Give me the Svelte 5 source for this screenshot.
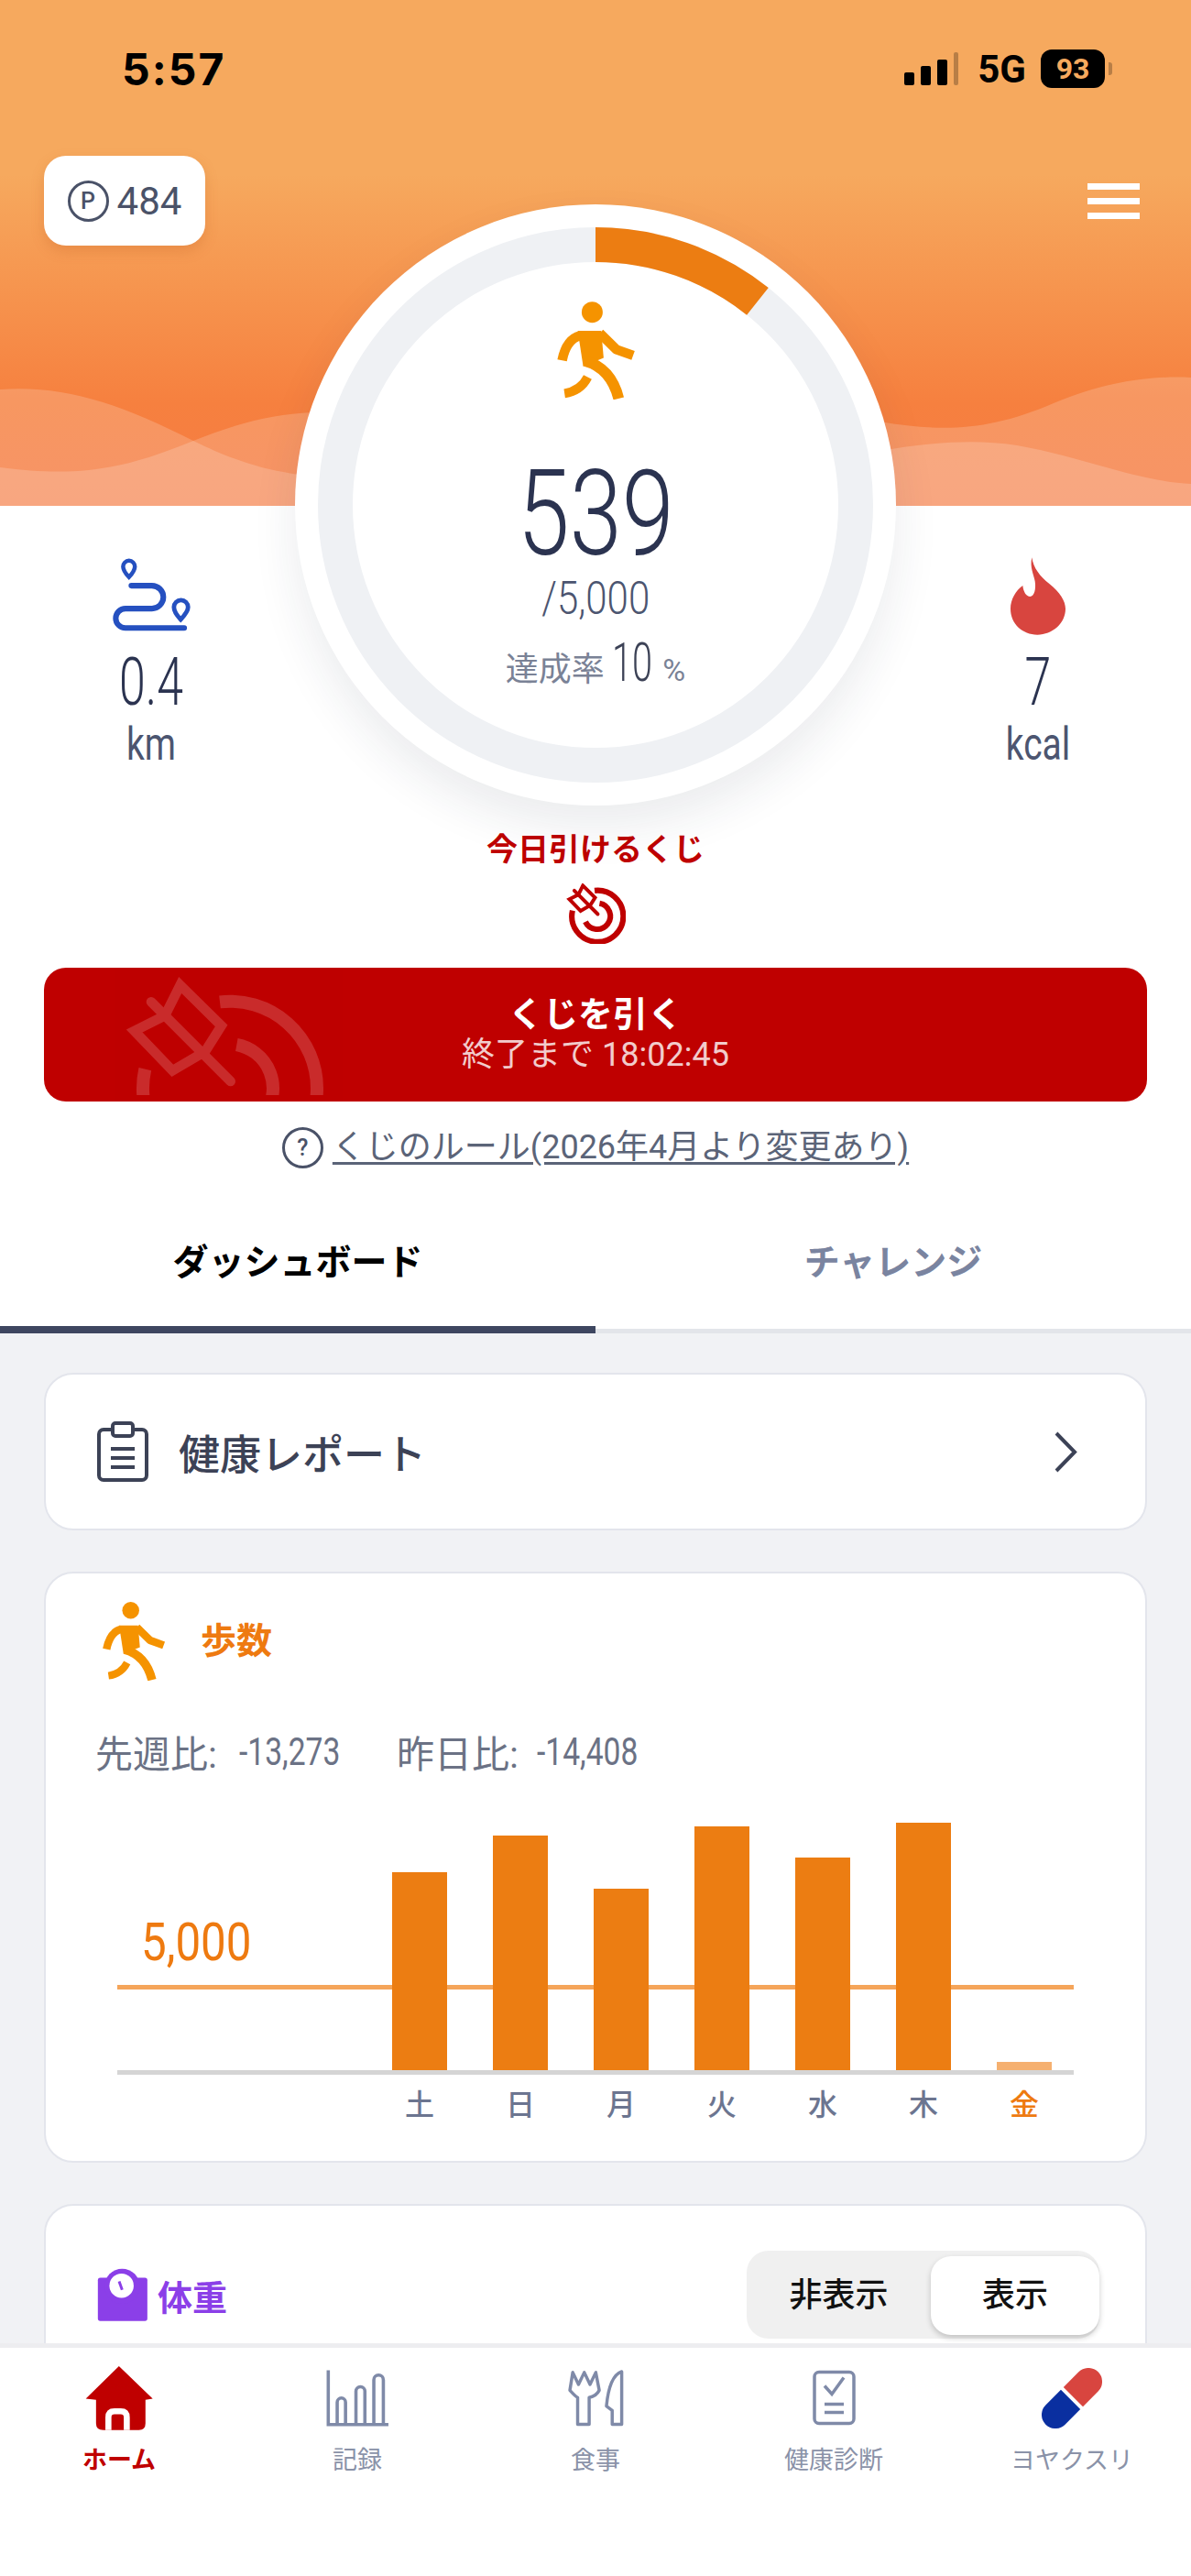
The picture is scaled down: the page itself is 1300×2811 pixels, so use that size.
<script>
	const goal = 5000;
	const steps = 539;
	const ringRadius = 284;
	const circumference = 2 * Math.PI * ringRadius;
	const arc = circumference * 0.107;

	const bars = [
		{ day: '土', height: 216 },
		{ day: '日', height: 256 },
		{ day: '月', height: 198 },
		{ day: '火', height: 266 },
		{ day: '水', height: 232 },
		{ day: '木', height: 270 },
		{ day: '金', height: 9, today: true }
	];
</script>

{#snippet walker()}
	<svg class="walker" viewBox="50 25 265 325">
		<circle cx="170" cy="60" r="35" fill="#f59300" />
		<path d="M122 122 H200 L208 212 L140 240 Z" fill="#f59300" />
		<g fill="none" stroke="#f59300" stroke-linejoin="round">
			<path d="M130 138 Q84 150 70 220" stroke-width="32" />
			<path d="M195 130 L250 184 L306 204" stroke-width="32" />
			<path d="M145 222 Q232 245 258 347" stroke-width="36" />
			<path d="M155 276 Q132 322 78 330" stroke-width="30" />
		</g>
	</svg>
{/snippet}

{#snippet shuttle(color, ring, line)}
	<g fill="none" stroke={color}>
		<path d="M175 380 A285 285 0 1 0 420 160" stroke-width={ring} />
		<path d="M475 300 A145 145 0 1 1 318 505" stroke-width={ring} />
		<path d="M290 105 L425 238 L372 322 L265 385 L140 255 L240 205 Z" stroke-width={line} stroke-linejoin="miter" />
		<path d="M195 160 L455 420" stroke-width={line} stroke-linecap="round" />
	</g>
{/snippet}

<div class="app">
	<div class="main">
		<section class="top">
			<div class="sky">
				<svg class="waves" viewBox="0 0 1300 552" preserveAspectRatio="none">
					<path d="M0 425 C70 420 130 440 211 481 C270 510 300 514 340 520 L340 552 L0 552 Z" fill="#fff" opacity="0.18" />
					<path d="M0 510 C90 522 140 510 211 481 C260 461 300 452 340 450 L340 552 L0 552 Z" fill="#fff" opacity="0.18" />
					<path d="M960 460 C1030 472 1080 470 1150 440 C1210 415 1260 410 1300 412 L1300 552 L960 552 Z" fill="#fff" opacity="0.18" />
					<path d="M960 492 C1010 484 1060 478 1110 486 C1180 498 1240 525 1300 528 L1300 552 L960 552 Z" fill="#fff" opacity="0.18" />
				</svg>

				<div class="status">
					<span class="clock">5:57</span>
					<div class="status-right">
						<div class="signal">
							<i class="s1"></i><i class="s2"></i><i class="s3"></i><i class="s4"></i>
						</div>
						<span class="net">5G</span>
						<span class="battery">93</span>
						<i class="battery-tip"></i>
					</div>
				</div>

				<div class="topbar">
					<div class="points">
						<span class="round-mark">P</span>
						<span>484</span>
					</div>
					<div class="burger"><i></i><i></i><i></i></div>
				</div>
			</div>

			<div class="dial">
				<svg class="ring" viewBox="0 0 656 656">
					<circle cx="328" cy="328" r={ringRadius} fill="none" stroke="#eff1f4" stroke-width="38" />
					<circle
						cx="328"
						cy="328"
						r={ringRadius}
						fill="none"
						stroke="#ec7d12"
						stroke-width="38"
						stroke-dasharray="{arc} {circumference}"
						transform="rotate(-90 328 328)"
					/>
				</svg>
				<div class="dial-body">
					<div class="dial-walker">{@render walker()}</div>
					<div class="count">{steps}</div>
					<div class="goal">/5,000</div>
					<div class="rate">
						<span class="rate-label">達成率</span>
						<span class="rate-num">10</span>
						<span class="rate-unit">%</span>
					</div>
				</div>
			</div>

			<div class="stats">
				<div class="stat">
					<svg class="stat-icon" viewBox="0 0 285 265" width="92" height="85">
						<g fill="none" stroke="#2550c0" stroke-width="19" stroke-linecap="round">
							<path d="M75 97 H145 a39 39 0 0 1 0 78 H55 a33 33 0 0 0 0 66 H255" />
							<path d="M67 68 C52 52 47 42 47 32 a20 20 0 0 1 40 0 C87 42 82 52 67 68 Z" stroke-width="14" />
							<path d="M243 212 C226 194 220 182 220 170 a24 24 0 0 1 48 0 C268 182 260 194 243 212 Z" stroke-width="15" />
						</g>
					</svg>
					<div class="stat-value">0.4</div>
					<div class="stat-unit">km</div>
				</div>
				<div class="stat right">
					<svg class="stat-icon" viewBox="38 22 180 253" width="60" height="85">
						<path
							d="M108 22 C112 55 135 85 165 108 C200 135 218 165 218 190 C218 238 175 275 126 275 C78 275 38 240 38 190 C38 160 55 130 78 114 C80 135 90 150 102 150 C116 150 122 125 118 100 C115 80 100 55 108 22 Z"
							fill="#d8453f"
						/>
					</svg>
					<div class="stat-value">7</div>
					<div class="stat-unit">kcal</div>
				</div>
			</div>

			<div class="lottery-title">今日引けるくじ</div>
			<svg class="lottery-icon" viewBox="115 80 640 670">
				{@render shuttle('#bf0000', 62, 40)}
			</svg>

			<div class="draw">
				<svg class="draw-mark" viewBox="0 0 960 465">
					{@render shuttle('#ffffff', 42, 32)}
				</svg>
				<div class="draw-title">くじを引く</div>
				<div class="draw-sub">終了まで 18:02:45</div>
			</div>

			<div class="rule">
				<span class="round-mark">?</span>
				<span class="rule-link">くじのルール(2026年4月より変更あり)</span>
			</div>

			<div class="tabs">
				<div class="tab active">ダッシュボード</div>
				<div class="tab">チャレンジ</div>
			</div>
		</section>

		<section class="cards">
			<div class="card report">
				<svg viewBox="0 0 56 66" width="56" height="66">
					<g fill="none" stroke="#3c4256" stroke-width="4">
						<rect x="2" y="9" width="52" height="55" rx="5" />
						<rect x="17" y="2" width="22" height="14" rx="3" fill="#fff" />
						<path d="M15 30 H41 M15 40 H41 M15 50 H41" />
					</g>
				</svg>
				<span class="report-name">健康レポート</span>
				<svg class="chevron" viewBox="0 0 26 45" width="26" height="45">
					<path d="M3 2 L23 22.5 L3 43" fill="none" stroke="#3c4256" stroke-width="4" />
				</svg>
			</div>

			<div class="card step-card">
				<div class="step-head">
					{@render walker()}
					<span class="step-name">歩数</span>
				</div>
				<div class="compare">
					<span class="cmp-label">先週比:</span>
					<span class="cmp-num">-13,273</span>
					<span class="cmp-label second">昨日比:</span>
					<span class="cmp-num">-14,408</span>
				</div>
				<div class="plot">
					<span class="goal-label">5,000</span>
					<i class="goal-line"></i>
					{#each bars as bar}
						<div class="bar" class:today={bar.today} style="height: {bar.height}px"></div>
					{/each}
				</div>
				<div class="days">
					{#each bars as bar}
						<span class:today={bar.today}>{bar.day}</span>
					{/each}
				</div>
			</div>

			<div class="card weight-card">
				<div class="weight-name">
					<svg viewBox="78 38 168 175" width="56" height="58">
						<rect x="80" y="70" width="163" height="142" rx="8" fill="#8b3fe8" />
						<circle cx="160" cy="98" r="58" fill="#8b3fe8" />
						<circle cx="158" cy="96" r="40" fill="#fff" />
						<path d="M150 82 L160 110" stroke="#8b3fe8" stroke-width="9" />
					</svg>
					<span>体重</span>
				</div>
				<div class="toggle">
					<span class="seg">非表示</span>
					<span class="seg on">表示</span>
				</div>
			</div>
		</section>
	</div>

	<nav class="nav">
		<div class="nav-item active">
			<div class="nav-icon">
				<svg viewBox="40 360 225 217" width="74" height="72">
					<path
						d="M152 362 L264 470 L240 474 V552 Q240 574 218 574 L100 574 Q76 574 76 552 V474 L42 470 Z"
						fill="#bf0000"
					/>
					<path d="M117 574 V532 Q117 512 137 512 H158 Q178 512 178 532 V574" fill="none" stroke="#fff" stroke-width="20" />
				</svg>
			</div>
			<span>ホーム</span>
		</div>
		<div class="nav-item">
			<div class="nav-icon">
				<svg viewBox="40 40 215 200" width="70" height="65">
					<g fill="none" stroke="#7f8aa8" stroke-width="11">
						<path d="M50 48 V230 H252" />
						<path d="M80 230 V155 a14 14 0 0 1 28 0 V230" />
						<path d="M143 230 V118 a15 15 0 0 1 30 0 V230" />
						<path d="M203 230 V80 a16 16 0 0 1 32 0 V230" />
					</g>
				</svg>
			</div>
			<span>記録</span>
		</div>
		<div class="nav-item">
			<div class="nav-icon">
				<svg viewBox="822 35 210 205" width="66" height="66">
					<g fill="none" stroke="#7f8aa8" stroke-width="11" stroke-linejoin="round">
						<path d="M848 48 L838 110 Q858 132 865 135 V228 H905 V135 Q930 130 940 110 L928 48 L908 90 L888 48 L868 90 Z" />
						<path d="M1018 45 Q975 60 965 165 L985 180 V228 H1018 Z" />
					</g>
				</svg>
			</div>
			<span>食事</span>
		</div>
		<div class="nav-item">
			<div class="nav-icon">
				<svg viewBox="0 0 47 60" width="47" height="61">
					<g fill="none" stroke="#7f8aa8" stroke-width="3.5">
						<rect x="2" y="2" width="43" height="56" rx="5" />
						<path d="M13 17 L21 26 L34 8" />
						<path d="M13 37 H34 M13 46 H34" />
					</g>
				</svg>
			</div>
			<span>健康診断</span>
		</div>
		<div class="nav-item">
			<div class="nav-icon">
				<svg viewBox="0 0 66 66" width="66" height="66">
					<g transform="rotate(45 33 33)">
						<path d="M18 31 V7.5 a15 15 0 0 1 30 0 V31 Z" fill="#d8453f" />
						<path d="M18 35 V58.5 a15 15 0 0 0 30 0 V35 Z" fill="#0a2fa0" />
					</g>
				</svg>
			</div>
			<span>ヨヤクスリ</span>
		</div>
	</nav>
</div>

<style>
	:global(body) {
		margin: 0;
	}

	.app {
		width: 1300px;
		height: 2811px;
		display: flex;
		flex-direction: column;
		overflow: hidden;
		background: #f1f2f5;
		font-family: Roboto, 'Noto Sans CJK JP', sans-serif;
		color: #3c4256;
	}

	.main {
		flex: 1;
		min-height: 0;
		overflow: hidden;
	}

	.top {
		position: relative;
		background: #fff;
	}

	.sky {
		position: relative;
		height: 552px;
		background: linear-gradient(180deg, #f6a95e 0, #f6a95e 190px, #f6803f 440px, #f67c44 552px);
	}

	.waves {
		position: absolute;
		inset: 0;
		width: 100%;
		height: 100%;
	}

	.status {
		position: relative;
		display: flex;
		justify-content: space-between;
		align-items: center;
		height: 50px;
		padding: 50px 86px 0 133px;
		color: #000;
	}

	.clock {
		font-family: Inter, sans-serif;
		font-size: 48px;
		font-weight: 700;
		letter-spacing: 2px;
	}

	.status-right {
		display: flex;
		align-items: center;
	}

	.signal {
		display: flex;
		align-items: flex-end;
		gap: 7px;
		height: 36px;
		margin-right: 21px;
	}

	.signal i {
		display: block;
		width: 11px;
		background: #000;
		border-radius: 2px;
	}

	.s1 {
		height: 14px;
	}

	.s2 {
		height: 21px;
	}

	.s3 {
		height: 28px;
	}

	.signal .s4 {
		height: 36px;
		width: 5px;
		background: rgba(0, 0, 0, 0.25);
	}

	.net {
		font-size: 42px;
		font-weight: 700;
		margin-right: 16px;
	}

	.battery {
		width: 70px;
		height: 42px;
		line-height: 42px;
		text-align: center;
		border-radius: 12px;
		background: #000;
		color: #f6a95e;
		font-size: 32px;
		font-weight: 700;
	}

	.battery-tip {
		width: 4px;
		height: 14px;
		margin-left: 4px;
		border-radius: 0 3px 3px 0;
		background: rgba(0, 0, 0, 0.25);
	}

	.topbar {
		position: relative;
		display: flex;
		justify-content: space-between;
		align-items: center;
		margin-top: 70px;
		padding: 0 56px 0 48px;
	}

	.points {
		display: flex;
		align-items: center;
		justify-content: center;
		gap: 9px;
		width: 176px;
		height: 98px;
		border-radius: 24px;
		background: #fff;
		box-shadow: 0 6px 14px rgba(190, 90, 30, 0.25);
		font-size: 42px;
		color: #4a5268;
	}

	.round-mark {
		box-sizing: border-box;
		flex: none;
		width: 45px;
		height: 45px;
		border: 3px solid #4a5268;
		border-radius: 50%;
		font-size: 25px;
		font-weight: 500;
		line-height: 39px;
		text-align: center;
		color: #4a5268;
	}

	.burger {
		display: flex;
		flex-direction: column;
		gap: 9px;
		width: 57px;
	}

	.burger i {
		display: block;
		height: 7px;
		background: #fff;
	}

	.dial {
		position: absolute;
		left: 322px;
		top: 223px;
		width: 656px;
		height: 656px;
		border-radius: 50%;
		background: #fff;
		box-shadow: 0 24px 50px rgba(30, 40, 70, 0.09);
	}

	.ring {
		position: absolute;
		inset: 0;
		width: 100%;
		height: 100%;
	}

	.dial-body {
		position: relative;
		display: flex;
		flex-direction: column;
		align-items: center;
		padding-top: 106px;
	}

	.dial-walker {
		width: 87px;
		height: 107px;
	}

	.walker {
		display: block;
		width: 100%;
		height: 100%;
	}

	.count {
		margin-top: 61px;
		font-size: 130px;
		font-weight: 300;
		line-height: 128px;
		color: #2b3350;
		transform: scaleX(0.79);
	}

	.goal {
		margin-top: 3px;
		font-size: 50px;
		font-weight: 300;
		line-height: 50px;
		color: #4c5570;
		transform: scaleX(0.84);
	}

	.rate {
		display: flex;
		align-items: baseline;
		margin-top: 15px;
		line-height: 60px;
	}

	.rate-label {
		font-size: 36px;
		color: #7a8296;
	}

	.rate-num {
		margin: 0 -11px 0 8px;
		font-size: 60px;
		font-weight: 300;
		color: #3c4256;
		transform: scaleX(0.66);
		transform-origin: left;
	}

	.rate-unit {
		font-size: 34px;
		color: #7a8296;
	}

	.stats {
		display: flex;
		justify-content: space-between;
		padding: 56px 67px 0 65px;
	}

	.stat {
		width: 200px;
		text-align: center;
	}

	.stat-icon {
		display: block;
		margin: 0 auto;
	}

	.stat-value {
		margin-top: 16px;
		font-size: 72px;
		font-weight: 300;
		line-height: 72px;
		color: #2b3350;
		transform: scaleX(0.72);
	}

	.stat-unit {
		margin-top: 6px;
		font-size: 50px;
		line-height: 50px;
		color: #4c5570;
		transform: scaleX(0.78);
	}

	.lottery-title {
		margin-top: 70px;
		font-size: 34px;
		font-weight: 700;
		line-height: 40px;
		text-align: center;
		color: #bf0000;
	}

	.lottery-icon {
		display: block;
		width: 65px;
		height: 66px;
		margin: 17px auto 0;
	}

	.draw {
		position: relative;
		display: flex;
		flex-direction: column;
		justify-content: center;
		align-items: center;
		height: 146px;
		margin: 26px 48px 0;
		border-radius: 24px;
		overflow: hidden;
		background: #bf0000;
		color: #fff;
	}

	.draw-mark {
		position: absolute;
		left: 52px;
		top: -16px;
		width: 320px;
		height: 155px;
		opacity: 0.17;
	}

	.draw-title {
		position: relative;
		font-size: 38px;
		font-weight: 700;
		line-height: 44px;
	}

	.draw-sub {
		position: relative;
		font-size: 36px;
		line-height: 44px;
		opacity: 0.8;
	}

	.rule {
		display: flex;
		justify-content: center;
		align-items: center;
		gap: 10px;
		margin-top: 28px;
		height: 45px;
	}

	.rule-link {
		font-size: 36px;
		line-height: 45px;
		color: #5b6478;
		text-decoration: underline;
		text-underline-offset: 4px;
	}

	.tabs {
		display: flex;
		margin-top: 40px;
	}

	.tab {
		box-sizing: border-box;
		width: 50%;
		height: 140px;
		padding-top: 44px;
		border-bottom: 5px solid #e3e5ea;
		font-size: 39px;
		font-weight: 700;
		line-height: 38px;
		text-align: center;
		color: #7a84a0;
	}

	.tab.active {
		border-bottom: 8px solid #3e4660;
		color: #000;
	}

	.cards {
		display: flex;
		flex-direction: column;
		gap: 45px;
		padding: 43px 48px 0;
	}

	.card {
		box-sizing: border-box;
		border: 2px solid #e3e5ec;
		border-radius: 32px;
		background: #fff;
	}

	.report {
		display: flex;
		align-items: center;
		gap: 33px;
		height: 172px;
		padding: 0 74px 0 56px;
	}

	.report-name {
		font-size: 45px;
		font-weight: 500;
		color: #3c4256;
	}

	.chevron {
		margin-left: auto;
	}

	.step-card {
		height: 645px;
		padding: 31px 0 0 54px;
	}

	.step-head {
		display: flex;
		align-items: center;
		gap: 38px;
		height: 86px;
	}

	.step-head :global(.walker) {
		width: 70px;
		height: 86px;
		margin-left: 7px;
	}

	.step-name {
		margin-top: -8px;
		font-size: 39px;
		font-weight: 700;
		color: #ee7a10;
	}

	.compare {
		display: flex;
		align-items: center;
		height: 44px;
		margin-top: 55px;
		color: #6b7285;
	}

	.cmp-label {
		width: 141px;
		font-size: 41px;
		white-space: nowrap;
	}

	.cmp-label.second {
		width: 137px;
		margin-left: 56px;
	}

	.cmp-num {
		width: 116px;
		margin-left: 16px;
		font-size: 42px;
		white-space: nowrap;
		transform: scaleX(0.8);
		transform-origin: left;
	}

	.plot {
		position: relative;
		display: flex;
		align-items: flex-end;
		gap: 50px;
		width: 744px;
		height: 298px;
		margin: 28px 0 0 24px;
		padding-left: 300px;
		border-bottom: 5px solid #d5d5d5;
	}

	.goal-label {
		position: absolute;
		left: 26px;
		top: 128px;
		font-size: 58px;
		line-height: 60px;
		color: #ee7a10;
		transform: scaleX(0.85);
		transform-origin: left;
	}

	.goal-line {
		position: absolute;
		left: 0;
		right: 0;
		top: 205px;
		height: 5px;
		background: #f5a55a;
	}

	.bar {
		position: relative;
		width: 60px;
		background: #ec7d12;
	}

	.bar.today {
		background: #f5b070;
	}

	.days {
		display: flex;
		gap: 50px;
		margin: 10px 0 0 324px;
		font-size: 32px;
		font-weight: 500;
		line-height: 46px;
		color: #6c7590;
	}

	.days span {
		width: 60px;
		text-align: center;
	}

	.days .today {
		color: #ee7a10;
	}

	.weight-card {
		display: flex;
		justify-content: space-between;
		align-items: center;
		height: 240px;
		padding: 49px 50px 91px 56px;
		overflow: hidden;
	}

	.weight-name {
		display: flex;
		align-items: center;
		gap: 10px;
		font-size: 38px;
		font-weight: 700;
		color: #8b3fe8;
	}

	.toggle {
		display: flex;
		align-items: flex-start;
		box-sizing: border-box;
		width: 385px;
		height: 96px;
		padding-top: 6px;
		border-radius: 24px;
		background: #f0f0f0;
		font-size: 36px;
		font-weight: 500;
		color: #111;
	}

	.seg {
		flex: 1;
		line-height: 86px;
		text-align: center;
	}

	.seg.on {
		flex: none;
		width: 184px;
		border-radius: 22px;
		background: #fff;
		box-shadow: 0 3px 6px rgba(0, 0, 0, 0.2);
	}

	.nav {
		flex: none;
		display: grid;
		grid-template-columns: repeat(5, 1fr);
		box-sizing: border-box;
		height: 254px;
		padding-top: 18px;
		border-top: 5px solid #ededf0;
		background: #fff;
	}

	.nav-item {
		display: flex;
		flex-direction: column;
		align-items: center;
		font-size: 27px;
		line-height: 34px;
		color: #8a92a8;
	}

	.nav-item.active {
		font-weight: 700;
		color: #bf0000;
	}

	.nav-icon {
		display: flex;
		align-items: center;
		justify-content: center;
		height: 73px;
		margin-bottom: 15px;
	}
</style>
